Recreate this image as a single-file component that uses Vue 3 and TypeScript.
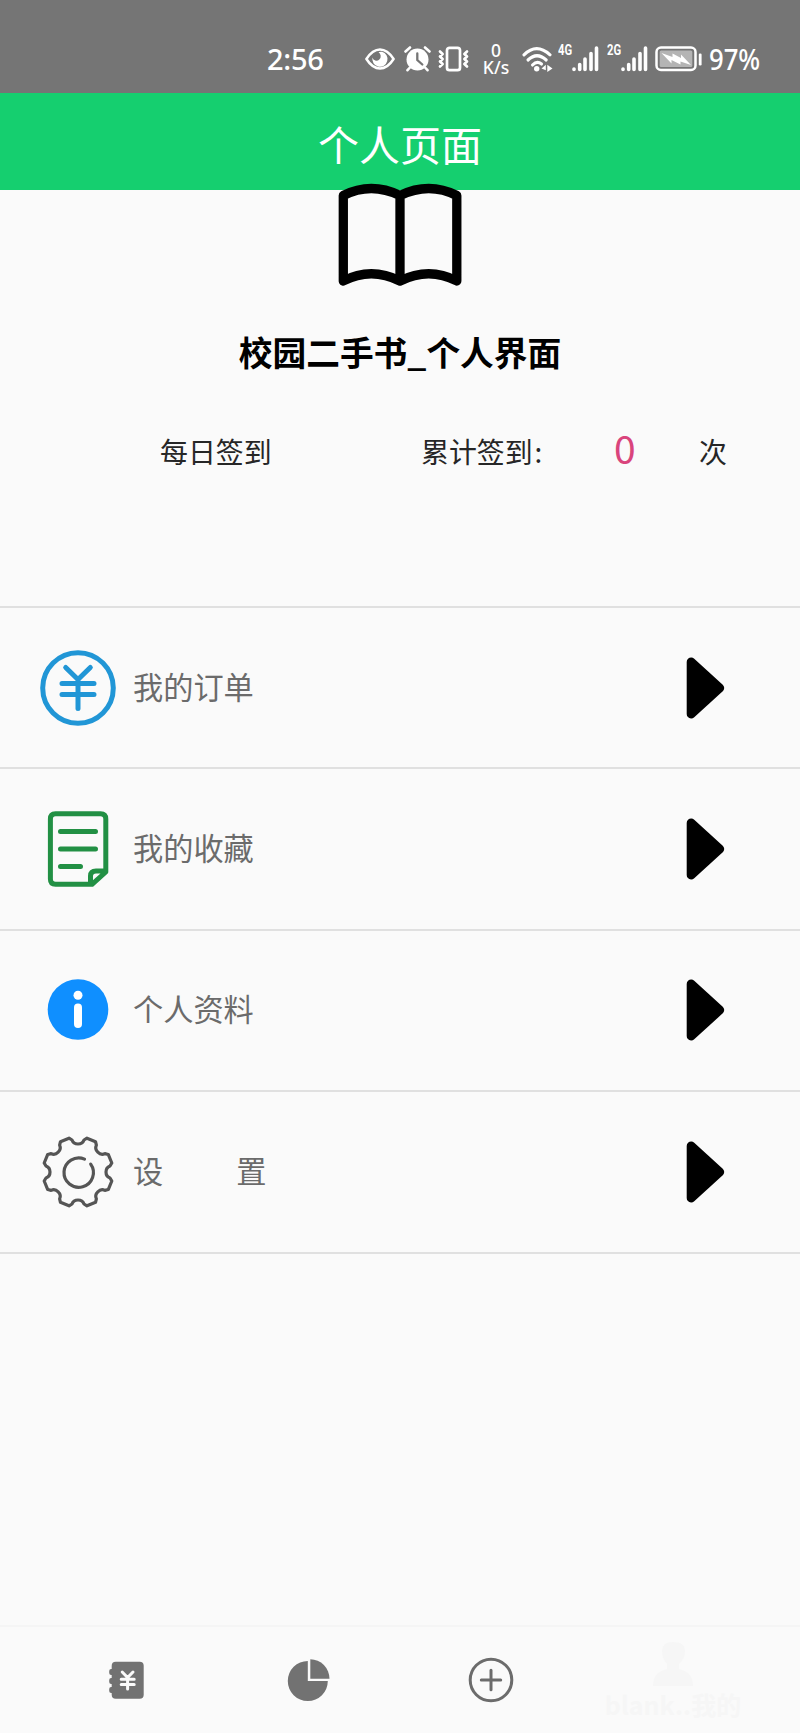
<script setup lang="ts">
interface MenuItem {
  icon: 'order' | 'note' | 'info' | 'gear'
  label: string
  spaced?: string
}

const items: MenuItem[] = [
  { icon: 'order', label: '我的订单' },
  { icon: 'note', label: '我的收藏' },
  { icon: 'info', label: '个人资料' },
  { icon: 'gear', label: '设', spaced: '置' },
]

// One notch of the cog, centred on the origin and pointing up.
const notch: [number, number][] = [
  [-9, -33.8], [-6, -32], [-4.6, -28], [0, -28], [4.6, -28], [6, -32], [9, -33.8],
]

function cogPath(): string {
  let d = ''
  for (let k = 0; k < 8; k++) {
    const a = (k * Math.PI) / 4
    const p = notch.map(([x, y]) =>
      `${(x * Math.cos(a) - y * Math.sin(a)).toFixed(2)} ${(x * Math.sin(a) + y * Math.cos(a)).toFixed(2)}`)
    d += `${k ? 'L' : 'M'}${p[0]}L${p[1]}Q${p[2]} ${p[3]}Q${p[4]} ${p[5]}L${p[6]}`
  }
  return d + 'Z'
}

const cog = cogPath()
</script>

<template>
  <div class="page">
    <div class="status">
      <span class="clock">2:56</span>
      <svg class="eye" width="30" height="22" viewBox="0 0 30 22">
        <path d="M1.4 11Q7.500 1.500 15 1.500T28.600 11Q22.500 20.500 15 20.500T1.400 11Z" fill="none" stroke="#fff" stroke-width="2.500" stroke-linejoin="round" />
        <path d="M17 3.800A7.600 7.600 0 1 1 7.500 9.500A4 4 0 0 0 14.300 11.500A4.600 4.600 0 0 0 13.500 4.200Q15 3.500 17 3.800z" fill="#fff" />
      </svg>
      <svg class="alarm" width="27" height="26" viewBox="0 0 27 26">
        <circle cx="13.500" cy="13.500" r="11" fill="#fff" />
        <path d="M1.500 5.500L6 1.500M25.500 5.500L21 1.500M5.500 22L3.500 24.200M21.500 22L23.500 24.200" stroke="#fff" stroke-width="2.600" stroke-linecap="round" />
        <path d="M13.300 7.500V14L18.300 18.500" fill="none" stroke="#757575" stroke-width="2.300" stroke-linecap="round" />
      </svg>
      <svg class="vibrate" width="31" height="26" viewBox="0 0 31 26">
        <rect x="9" y="1.800" width="13" height="22.400" rx="2.500" fill="none" stroke="#fff" stroke-width="2.700" />
        <path d="M2 5.500l2.600 2.500-2.600 2.500 2.600 2.500-2.600 2.500 2.600 2.500-2.600 2.500M29 5.500l-2.600 2.500 2.600 2.500-2.600 2.500 2.600 2.500-2.600 2.500 2.600 2.500" fill="none" stroke="#fff" stroke-width="2.700" stroke-linecap="round" stroke-linejoin="round" />
      </svg>
      <div class="speed"><span>0</span><span>K/s</span></div>
      <svg class="wifi" width="31" height="27" viewBox="0 0 31 27">
        <g fill="none" stroke="#fff" stroke-width="3.100" stroke-linecap="round">
          <path d="M2 8.800Q14.500-3.400 28 8.800" />
          <path d="M6 14Q15 5.500 24.200 14" />
          <path d="M10.500 19Q15 14.400 19.500 18" />
        </g>
        <circle cx="14.700" cy="22.800" r="2.700" fill="#fff" />
        <path d="M19.500 22.500l4.300-3.800v5.600zM25.300 18.700l5.200 3.700-5.200 3.700z" fill="#fff" />
      </svg>
      <span class="net">4G</span>
      <svg class="signal" width="27" height="26" viewBox="0 0 27 26">
        <path d="M2 23v.5M7.700 18.500v5M13 13v10.500M19 7.500v16M24.500 2v21.500" stroke="#fff" stroke-width="3.600" stroke-linecap="round" />
      </svg>
      <span class="net second">2G</span>
      <svg class="signal" width="27" height="26" viewBox="0 0 27 26">
        <path d="M2 23v.5M7.700 18.500v5M13 13v10.500M19 7.500v16M24.500 2v21.500" stroke="#fff" stroke-width="3.600" stroke-linecap="round" />
      </svg>
      <svg class="battery" width="48" height="26" viewBox="0 0 48 26">
        <rect x="1.500" y="1.600" width="39" height="22.400" rx="4.500" fill="none" stroke="#fff" stroke-width="2.500" />
        <rect x="4.700" y="4.600" width="32.600" height="16.400" rx="1.500" fill="#b4b4b4" />
        <path d="M6.500 7L17.500 11V7.500L26 12V8.500L36 19L25.500 15.500V18.500L16.500 14V17.500Z" fill="#fff" />
        <rect x="43.800" y="7.500" width="2.800" height="12" rx="1.200" fill="#fff" />
      </svg>
      <span class="percent">97%</span>
    </div>

    <header class="titlebar">个人页面</header>

    <section class="profile">
      <svg class="book" width="124" height="104" viewBox="338 183 124 104">
        <path d="M343.300 281V195.500Q371 181.500 400 195.500Q429 181.500 456.800 195.500V281Q429 266.500 400 281Q371 266.500 343.300 281ZM400 195.500V281" fill="none" stroke="#000" stroke-width="9.300" stroke-linejoin="round" />
      </svg>
      <h1>校园二手书_个人界面</h1>
      <div class="checkin">
        <span class="daily">每日签到</span>
        <span class="total">累计签到<span class="colon">:</span></span>
        <span class="count">0</span>
        <span>次</span>
      </div>
    </section>

    <main class="menu">
      <div v-for="item in items" :key="item.icon" class="row">
        <svg class="icon" width="80" height="80" viewBox="-40 -40 80 80">
          <g v-if="item.icon === 'order'" fill="none" stroke="#2196d6" stroke-linecap="round" stroke-linejoin="round">
            <circle r="35.300" stroke-width="5" />
            <path d="M-12.300-20.500L0-8.500L12.300-20.500M0-8.500V20.500M-16-4.500H16M-16 6.500H16" stroke-width="5" />
          </g>
          <g v-else-if="item.icon === 'note'" fill="none" stroke="#229044" stroke-width="5" stroke-linecap="round" stroke-linejoin="round">
            <path d="M14 35.300H-22.500Q-27.600 35.300-27.600 30V-30Q-27.600-35.300-22.500-35.300H22.500Q27.800-35.300 27.800-30V23ZM14 35.300Q12.500 35.300 12.500 32V27Q12.500 22 18 22H27.800" />
            <path d="M-17.500-17.500H17.500M-17.500 0H17.500M-17.500 17.500H2.500" />
          </g>
          <g v-else-if="item.icon === 'info'" transform="translate(0 -0.500)">
            <circle r="30.300" fill="#0f8fff" />
            <circle cy="-14.300" r="4.500" fill="#fff" />
            <path d="M0-2V14.500" stroke="#fff" stroke-width="8" stroke-linecap="round" />
          </g>
          <g v-else fill="none" stroke="#555" stroke-width="3.200" stroke-linecap="round" stroke-linejoin="round">
            <path :d="cog" />
            <path d="M6.500-12.900A14.700 14.700 0 1 0 12.700-7.900" />
          </g>
        </svg>
        <span class="label">{{ item.label }}</span>
        <span v-if="item.spaced" class="label spaced">{{ item.spaced }}</span>
        <svg class="arrow" width="40" height="64" viewBox="0 0 40 64">
          <path d="M5.200 6L33.700 32L5.200 58Z" stroke="#000" stroke-width="9" stroke-linejoin="round" />
        </svg>
      </div>
    </main>

    <nav class="tabs">
      <div class="tab">
        <svg width="44" height="44" viewBox="1.800 0 44 44">
          <g fill="#727272">
            <rect x="8.500" y="3.800" width="32" height="37" rx="4" />
            <rect x="6" y="11" width="5" height="6" rx="2" />
            <rect x="6" y="20" width="5" height="6" rx="2" />
            <rect x="6" y="29" width="5" height="6" rx="2" />
          </g>
          <path d="M19 14l5.400 5.500L29.800 14M24.400 19.500V31M18 21.300h13M18 26.400h13" fill="none" stroke="#fafafa" stroke-width="3" stroke-linecap="round" />
        </svg>
      </div>
      <div class="tab">
        <svg width="44" height="44" viewBox="0 0 44 44">
          <path d="M20.800 3A20 20 0 1 0 40.800 23H20.800Z" fill="#727272" />
          <path d="M23.300 1.300A19.500 19.500 0 0 1 42.500 20.800H23.300Z" fill="#727272" />
        </svg>
      </div>
      <div class="tab">
        <svg width="46" height="46" viewBox="-23 -23 46 46">
          <g fill="none" stroke="#6c6c6c" stroke-linecap="round">
            <circle r="20.800" stroke-width="3" />
            <path d="M-9.700 0H9.700M0-9.700V9.700" stroke-width="3" />
          </g>
        </svg>
      </div>
      <div class="tab current">
        <svg width="44" height="46" viewBox="0 0 44 46">
          <path d="M11 10Q11 1 22 1Q34 1 34 10Q34 18 28 23V28Q42 31 42 45H2Q2 31 16 28V23Q11 18 11 10Z" fill="#f6f6f6" />
        </svg>
        <span>blank..我的</span>
      </div>
    </nav>
  </div>
</template>

<style>
body { background: #fafafa; }
</style>

<style scoped>
.page {
  display: flex;
  flex-direction: column;
  width: 800px;
  height: 1733px;
  overflow: hidden;
  background: #fafafa;
  font-family: "Noto Sans CJK SC", "Noto Sans", sans-serif;
}
svg { display: block; flex: none; }
span { white-space: nowrap; }

.status {
  display: flex;
  flex: none;
  align-items: center;
  box-sizing: border-box;
  height: 93px;
  padding: 25px 0 0 267px;
  background: #757575;
  color: #fff;
}
.clock, .percent {
  flex: none;
  font: 500 29px/36px "Noto Sans", sans-serif;
}
.clock { width: 98px; letter-spacing: -0.3px; }
.alarm { margin-left: 9px; }
.vibrate { margin-left: 7px; }
.speed {
  display: flex;
  flex-direction: column;
  align-items: center;
  flex: none;
  width: 28px;
  margin-left: 13px;
  font: 500 17.500px/17px "Noto Sans", sans-serif;
}
.wifi { margin-left: 12px; }
.net {
  flex: none;
  width: 14px;
  margin: -19px 0 0 5px;
  font: 700 15px/16px Roboto, sans-serif;
  transform: scaleX(0.75);
  transform-origin: left center;
}
.net.second { margin-left: 8px; }
.battery { margin-left: 7px; }
.percent {
  margin-left: 6px;
  font-size: 28.500px;
  transform: scaleX(0.9);
  transform-origin: left center;
}

.titlebar {
  flex: none;
  height: 96.500px;
  background: #15cf6f;
  color: #fff;
  font-size: 41px;
  line-height: 100px;
  text-align: center;
}

.profile {
  display: flex;
  flex: none;
  flex-direction: column;
  align-items: center;
  height: 416.500px;
}
.book { margin-top: -6.500px; }
h1 {
  margin: 40px 0 0;
  font-size: 33.700px;
  font-weight: 700;
  line-height: 50px;
  color: #000;
}
.checkin {
  display: flex;
  align-self: stretch;
  align-items: center;
  height: 60px;
  margin-top: 44px;
  padding-left: 160px;
  color: #262626;
  font-size: 27.900px;
  line-height: 40px;
}
.daily { width: 261px; }
.total { width: 193px; }
.colon { margin-left: 2px; }
.count {
  width: 85px;
  margin-top: -9px;
  color: #d9447c;
  font-size: 39px;
}

.menu { flex: none; border-top: 2px solid #e0e0e0; }
.row {
  display: flex;
  align-items: center;
  box-sizing: border-box;
  height: 161.400px;
  padding: 0 70px 0 38px;
  border-bottom: 2px solid #e0e0e0;
}
.label {
  margin: -4px 0 0 15px;
  color: #6b6b6b;
  font-size: 30.200px;
  line-height: 44px;
}
.label.spaced { margin-left: 73px; }
.arrow { margin-left: auto; margin-right: 4px; }

.tabs {
  display: flex;
  height: 106px;
  margin-top: auto;
  padding: 0 36px;
  border-top: 2px solid #f5f5f5;
}
.tab {
  display: flex;
  flex: 1;
  flex-direction: column;
  align-items: center;
  justify-content: center;
}
.tab.current {
  justify-content: flex-start;
  padding-top: 14px;
  color: #f6f6f6;
  font-size: 25px;
  font-weight: 700;
  line-height: 34px;
}
</style>
